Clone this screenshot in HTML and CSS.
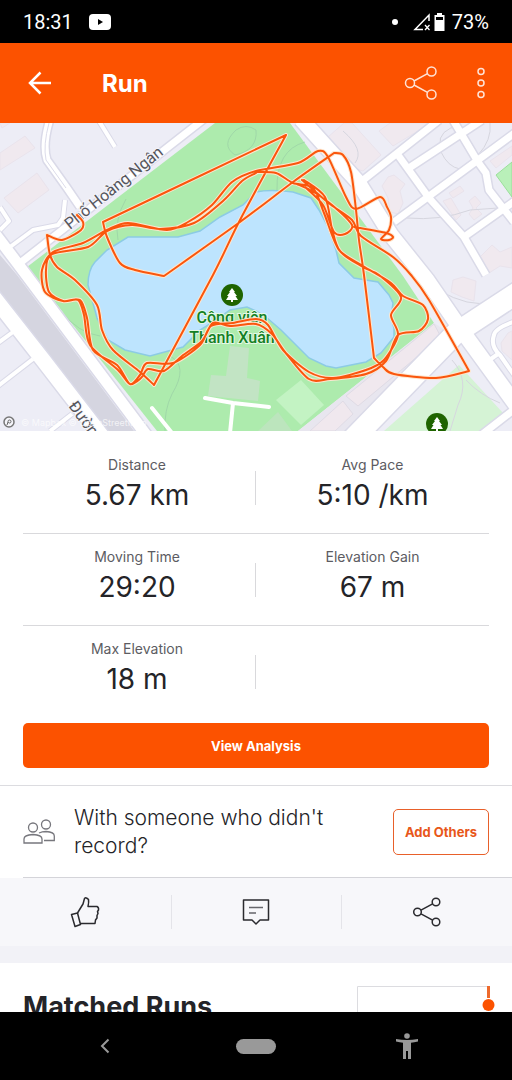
FILE: index.html
```
<!DOCTYPE html>
<html lang="en">
<head>
  <meta charset="UTF-8">
  <meta name="viewport" content="width=device-width, initial-scale=1">
  <title>Run</title>
  <link rel="stylesheet" href="styles.css">
</head>
<body>

  <div class="status-bar">
    <span>18:31</span>
    <svg class="video-icon" width="22" height="16" viewBox="0 0 22 16">
      <rect width="22" height="16" rx="4" fill="#fff"/>
      <path d="M9 5 L14 8 L9 11 Z" fill="#000"/>
    </svg>
    <div class="status-right">
      <span class="dot"></span>
      <svg width="34" height="20" viewBox="0 0 34 20">
        <path d="M17 9 V3 L3 17.500 H11" fill="none" stroke="#fff" stroke-width="1.500"/>
        <path d="M13 13 L17.500 18 M17.500 13 L13 18" stroke="#fff" stroke-width="1.300"/>
        <path d="M25 1 h5 v2 h2.500 v16 h-10 V3 H25 Z" fill="#fff"/>
        <rect x="24" y="5" width="7" height="3" fill="#000"/>
      </svg>
      <span>73%</span>
    </div>
  </div>

  <header class="app-bar">
    <button class="icon-button" aria-label="Back">
      <svg width="24" height="24" viewBox="0 0 24 24" fill="none" stroke="#fff" stroke-width="2.500">
        <path d="M23 12 H2 M12.500 1.500 L2 12 L12.500 22.500"/>
      </svg>
    </button>
    <h1>Run</h1>
    <button class="icon-button" aria-label="Share">
      <svg width="34" height="34" viewBox="0 0 34 34" fill="none" stroke="#ffe3d6" stroke-width="1.500">
        <circle cx="6" cy="17" r="4.500"/>
        <circle cx="27.500" cy="5.500" r="4.500"/>
        <circle cx="27.500" cy="28.500" r="4.500"/>
        <path d="M10 15 L23.500 7.700 M10 19 L23.500 26.300"/>
      </svg>
    </button>
    <button class="icon-button more" aria-label="More options">
      <svg width="10" height="32" viewBox="0 0 10 32" fill="none" stroke="#ffe3d6" stroke-width="1.500">
        <circle cx="5" cy="4.500" r="3"/>
        <circle cx="5" cy="16" r="3"/>
        <circle cx="5" cy="27.500" r="3"/>
      </svg>
    </button>
  </header>

  <main>
    <svg class="map" viewBox="0 123 512 308" preserveAspectRatio="xMidYMid slice">
      <rect x="0" y="123" width="512" height="308" fill="#ededf6"/>

      <!-- buildings -->
      <g fill="#f0e9ef" stroke="#e9e3ec" stroke-width="1">
        <path d="M0 153 L25 136 L35 148 L0 170 Z"/>
        <path d="M4 198 L37 173 L49 190 L18 213 Z"/>
        <path d="M0 123 H10 L2 128 Z"/>
        <path d="M328 137 L344 123 H352 L381 155 L363 171 L349 167 L335 150 Z"/>
        <path d="M379 131 L390 123 H431 L393 146 Z"/>
        <path d="M382 186 L388 177 L394 175 L400 180 L405 184 L400 191 L403 203 L398 214 L390 212 L388 198 Z"/>
        <path d="M449 193 L460 186 L464 191 L453 198 Z"/>
        <path d="M443 201 L451 198 L461 215 L456 220 Z"/>
        <path d="M469 201 L475 196 L481 203 L476 208 L482 214 L474 220 L469 214 L473 208 Z"/>
        <path d="M490 161 L512 146 V155 L496 168 Z"/>
        <path d="M480 257 L492 245 L500 252 L512 247 V268 L500 266 L489 273 Z"/>
        <path d="M453 280 L463 277 L476 281 L474 301 L462 297 L451 292 Z"/>
        <path d="M501 343 L508 333 L512 331 V360 L502 351 Z"/>
      </g>
      <path d="M496 175 L512 162 V197 Z" fill="#b9f0b9" stroke="#9adf9a"/>

      <!-- park and pond -->
      <path d="M215 123 H290 L403 276 L434 323 L298 431 H157 L27 267 Z" fill="#adebad"/>
      <path d="M434 323 L298 431 H345 L445 330 Z" fill="#e8e6ef"/>
      <path d="M434 324 L346 396 L358 406 L441 337 Z M343 401 L310 431 H335 L353 414 Z" fill="#f0e8ee" stroke="#dfdbe5" stroke-width="1"/>
      <path d="M276 400 L301 380 L324 405 L301 425 Z" fill="#c3f3c3"/>
      <path d="M384 431 L459 365 L503 413 L483 431 Z" fill="#d5f3d5"/>
      <path d="M230 346 L249 348 L247 378 L260 381 L258 401 L208 396 L211 375 L226 376 Z" fill="#c2e4c4"/>
      <path d="M258 431 L278 412 L292 431 Z" fill="#bce5bd"/>
      <path d="M88 285 Q88 270 95 262 L107 250 L128 237 H178 L200 231 L220 217 L243 205 L256 192 Q270 189 293 192 L311 198 L319 210 L328 227 L336 250 L339 263 L354 278 L378 282 L389 295 L393 303 L391 318 L394 328 V337 L381 353 L366 362 L336 368 L326 366 L309 358 L281 330 L266 317 L256 311 L247 307 L230 310 L213 322 L200 330 L183 347 L150 356 L125 350 L108 340 L97 318 Z" fill="#bde4fe" stroke="#8ccbe4" stroke-width="1.500"/>

      <!-- foot paths -->
      <g fill="none" stroke="#9acfa5" stroke-width="1" opacity=".7">
        <path d="M126 199 Q114 220 118 240 M236 130 Q220 145 235 155 Q258 150 256 130 Q246 123 236 130 M305 142 Q276 150 277 190 M61 311 Q78 333 100 336 M170 356 Q189 366 172 394 Q164 410 165 431"/>
      </g>
      <g fill="none" stroke="#d6d6df" stroke-width="1">
        <path d="M407 218 Q440 221 470 210 L512 207 M440 145 Q438 130 460 125 M441 152 Q448 167 460 169 M478 155 Q492 140 490 123 M438 290 Q470 308 490 302 M452 360 Q470 380 458 405 L450 431 M466 380 Q480 395 500 403 M343 131 Q365 150 355 163"/>
      </g>

      <!-- railway strip -->
      <path d="M0 255 L17 275 L134 431 H100 L15 312 L0 293 Z" fill="#d5d5e0"/>

      <!-- roads, casing first -->
      <g fill="none" stroke="#dadae8" stroke-linejoin="round">
        <path class="wide-casing" d="M350 442 L456 333 L520 291"/>
        <path class="main-casing" d="M301 119 L358 182 L391 235 L427 280 L460 328 L516 405"/>
        <path class="main-casing" d="M-8 295 L43 360 L104 439"/>
        <path class="side-casing" d="M-4 235 L15 260 L150 440"/>
        <path class="road-casing" d="M50 119 Q42 145 47 160 L67 188 L80 207 M204 119 L20 263 M439 120 L357 185 M516 132 L394 222 M398 155 L429 198 L464 237 L486 275 M453 120 L478 162 L486 173 L489 190 L514 222 M482 120 L409 168 M464 237 L516 200 M480 436 L516 408"/>
        <path class="lane-casing" d="M99 121 L115 147 M10 247 L33 230 L58 225 L63 218 L65 200 M0 207 L9 221 L0 230 M-2 343 L13 332 M-2 386 L33 359 M50 431 L72 414 M516 321 Q495 328 494 335 Q490 346 500 355 L516 378 M488 361 L498 354"/>
      </g>
      <g fill="none" stroke="#fff" stroke-linejoin="round">
        <path class="wide" d="M350 442 L456 333 L520 291"/>
        <path class="main" d="M301 119 L358 182 L391 235 L427 280 L460 328 L516 405"/>
        <path class="main" d="M-8 295 L43 360 L104 439"/>
        <path class="side" d="M-4 235 L15 260 L150 440"/>
        <path class="road" d="M50 119 Q42 145 47 160 L67 188 L80 207 M204 119 L20 263 M439 120 L357 185 M516 132 L394 222 M398 155 L429 198 L464 237 L486 275 M453 120 L478 162 L486 173 L489 190 L514 222 M482 120 L409 168 M464 237 L516 200 M480 436 L516 408"/>
        <path class="lane" d="M99 121 L115 147 M10 247 L33 230 L58 225 L63 218 L65 200 M0 207 L9 221 L0 230 M-2 343 L13 332 M-2 386 L33 359 M50 431 L72 414 M516 321 Q495 328 494 335 Q490 346 500 355 L516 378 M488 361 L498 354"/>
        <path class="lane" stroke-linecap="round" d="M205 398 L233 403 L269 407 M233 403 L230 433 M152 408 L172 433"/>
      </g>
      <path d="M49 123 Q43 145 46 160 L66 188" fill="none" stroke="#dcdcea"/>

      <!-- labels -->
      <g class="street">
        <text transform="translate(70 230) rotate(-39)">Phố Hoàng Ngân</text>
        <text transform="translate(68 406) rotate(54)">Đường</text>
      </g>
      <g class="park" text-anchor="middle">
        <text x="232" y="323">Công viên</text>
        <text x="232" y="343">Thanh Xuân</text>
      </g>
      <g id="tree">
        <circle cx="232" cy="295" r="11" fill="#1f6400"/>
        <path d="M232 288 L235 292 H234 L237 296 H235.500 L238 300 H233 V302 H231 V300 H226 L228.500 296 H227 L230 292 H229 Z" fill="#fff"/>
      </g>
      <use href="#tree" x="205" y="129"/>

      <g id="route"></g>

      <circle cx="9" cy="422" r="5" fill="#f5f5fa" stroke="#777" stroke-width="1.500"/>
      <circle cx="9.500" cy="421.500" r="1.500" fill="none" stroke="#666"/>
      <path d="M8 422 L7 425" stroke="#666"/>
      <text class="credit" x="21" y="426">© Mapbox © OpenStreetMap</text>
    </svg>

    <dl class="stats">
      <div class="stat">
        <dt>Distance</dt>
        <dd>5.67 km</dd>
      </div>
      <div class="stat">
        <dt>Avg Pace</dt>
        <dd>5:10 /km</dd>
      </div>
      <div class="stat">
        <dt>Moving Time</dt>
        <dd>29:20</dd>
      </div>
      <div class="stat">
        <dt>Elevation Gain</dt>
        <dd>67 m</dd>
      </div>
      <div class="stat">
        <dt>Max Elevation</dt>
        <dd>18 m</dd>
      </div>
    </dl>

    <div class="analysis">
      <button class="primary-button">View Analysis</button>
    </div>

    <section class="others">
      <svg width="32" height="26" viewBox="0 0 32 26" fill="none" stroke="#77777d" stroke-width="1.300">
        <circle cx="10" cy="8.500" r="4.500"/>
        <circle cx="23" cy="5.500" r="4.500"/>
        <path d="M1 24 V20 Q1 16 10 15.500 Q19 16 19 20 V24 Z"/>
        <path d="M16 14 Q19 12.500 23 12.500 Q31.300 13 31.300 17 V21.500 H21"/>
      </svg>
      <p>With someone who didn't record?</p>
      <button class="outline-button">Add Others</button>
    </section>

    <div class="actions">
      <button aria-label="Give kudos">
        <svg width="30" height="32" viewBox="0 0 30 32" fill="none" stroke="#2a2a2e" stroke-width="1.500" stroke-linejoin="round">
          <path d="M1.500 18.500 L7.500 17 L10.500 28.500 L5 30.500 Z"/>
          <path d="M7.500 17 L13 8 L14.500 2.500 Q16 .8 18.500 3.500 Q19 6 18 10.500 H27 Q29 11.500 28.500 14 L27.500 15.500 L28 17.500 L27 19.500 L27 22 L25.500 24 L25 27.500 H10.500"/>
        </svg>
      </button>
      <button aria-label="Comment">
        <svg width="28" height="28" viewBox="0 0 28 28" fill="none" stroke="#2a2a2e" stroke-width="1.500" stroke-linejoin="round">
          <path d="M1.500 2 H26.500 V22 H18 L14 26 L10 22 H1.500 Z"/>
          <path d="M7 9.500 H21 M7 15 H14" stroke="#66666b" stroke-width="1.300"/>
        </svg>
      </button>
      <button aria-label="Share activity">
        <svg width="30" height="30" viewBox="0 0 30 30" fill="none" stroke="#2a2a2e" stroke-width="1.500">
          <circle cx="5.500" cy="15" r="3.800"/>
          <circle cx="24" cy="5" r="3.800"/>
          <circle cx="24" cy="25" r="3.800"/>
          <path d="M9 13.200 L20.600 6.900 M9 16.800 L20.600 23.100"/>
        </svg>
      </button>
    </div>

    <section class="matched">
      <h2>Matched Runs</h2>
      <svg width="139" height="60" viewBox="0 0 139 60">
        <path d="M.5 60 V.5 H132" fill="none" stroke="#dcdce0"/>
        <path d="M131.500 0 V12" stroke="#ee6a2c" stroke-width="3"/>
        <circle cx="131.500" cy="19" r="6" fill="#fc5200"/>
      </svg>
    </section>
  </main>

  <nav class="system-nav">
    <button aria-label="System back">
      <svg width="10" height="16" viewBox="0 0 10 16" fill="none" stroke="#999" stroke-width="2">
        <path d="M8.500 1.500 L2 8 L8.500 14.500"/>
      </svg>
    </button>
    <button aria-label="Home"><span class="pill"></span></button>
    <button aria-label="Accessibility">
      <svg width="24" height="26" viewBox="0 0 24 26" fill="#999">
        <circle cx="12" cy="3" r="2.800"/>
        <path d="M1 6 Q12 8 23 6 V8.500 Q19 9.500 16 9.700 V26 H13 V18 H11 V26 H8 V9.700 Q5 9.500 1 8.500 Z"/>
      </svg>
    </button>
  </nav>

  <script>
    // each list is one smooth stretch of the track, sharp turns start a new list
    const stretches = [
      [[77,215],[83,222],[81,230],[62,240],[47,235]],
      [[47,235],[50,255],[57,267],[75,280],[97,305],[102,330],[113,350],[140,372],[154,385]],
      [[154,385],[213,275],[240,220],[286,135]],
      [[286,135],[103,222]],
      [[103,222],[107,237],[120,263],[135,270],[164,276]],
      [[164,276],[240,222],[293,182],[334,153]],
      [[334,153],[343,155],[351,172],[356,210],[359,240],[364,275],[374,358]],
      [[374,358],[383,367],[394,374],[436,378],[469,371]],
      [[469,371],[429,300],[411,275],[393,257],[361,236],[352,220],[330,204],[302,180]],
      [[354,227],[386,233],[393,237],[389,240],[381,239],[389,230],[391,217],[387,207],[380,197],[356,209],[346,197],[328,157],[318,151],[298,163],[256,171],[232,182],[212,205],[188,222],[167,230],[128,223],[107,230],[83,243],[53,252],[42,270],[45,292],[63,301],[80,300],[87,318],[93,350],[117,365],[130,384],[140,375],[147,363],[173,363],[200,345],[211,326],[233,323],[256,319],[268,325],[283,350],[309,372],[333,378],[366,370],[384,360],[398,335],[391,315],[401,297],[379,275],[363,267],[339,250],[324,213],[313,188],[293,183],[276,173],[256,172]],
      [[256,173],[242,181],[224,200],[194,223],[160,229],[132,225],[107,231],[88,247],[52,254],[46,270],[49,292],[63,301],[78,300],[84,315],[90,345],[118,370],[130,384],[141,378],[148,369],[164,371],[182,356],[202,341],[213,323],[230,326],[256,324],[272,334],[285,352],[309,379],[330,379],[366,374],[386,361],[398,335],[419,331],[428,319],[423,305],[403,296],[391,283],[363,266],[340,251],[332,229],[325,197],[304,180]],
      [[297,184],[312,191],[332,205],[352,225],[345,234],[334,232],[323,205],[305,187]]
    ];

    function smooth(pts) {
      let d = "M" + pts[0];
      for (let i = 0; i < pts.length - 1; i++) {
        const a = pts[i - 1] || pts[i];
        const b = pts[i];
        const c = pts[i + 1];
        const e = pts[i + 2] || c;
        const c1 = [b[0] + (c[0] - a[0]) / 7, b[1] + (c[1] - a[1]) / 7];
        const c2 = [c[0] - (e[0] - b[0]) / 7, c[1] - (e[1] - b[1]) / 7];
        d += " C" + c1 + " " + c2 + " " + c;
      }
      return d;
    }

    const route = document.getElementById("route");
    ["route-halo", "route-line"].forEach((name) => {
      const path = document.createElementNS("http://www.w3.org/2000/svg", "path");
      path.setAttribute("class", name);
      path.setAttribute("d", stretches.map(smooth).join(" "));
      route.appendChild(path);
    });
  </script>
</body>
</html>
```
FILE: styles.css
```
* {
  box-sizing: border-box;
}

body {
  margin: 0;
  height: 100vh;
  display: flex;
  flex-direction: column;
  overflow: hidden;
  background-color: #fff;
  color: #242428;
  font-family: Inter, "Liberation Sans", sans-serif;
}

button {
  border: none;
  background: none;
  padding: 0;
  font-family: inherit;
  cursor: pointer;
}

svg {
  display: block;
  flex-shrink: 0;
}

.status-bar {
  flex-shrink: 0;
  display: flex;
  align-items: center;
  height: 43px;
  padding: 0 23px;
  background-color: #000;
  color: #fff;
  font-family: Roboto, sans-serif;
  font-size: 20px;
}

.video-icon {
  margin-left: 16px;
}

.status-right {
  display: flex;
  align-items: center;
  gap: 6px;
  margin-left: auto;
}

.dot {
  width: 6px;
  height: 6px;
  margin-right: 8px;
  border-radius: 50%;
  background-color: #fff;
}

.app-bar {
  flex-shrink: 0;
  display: flex;
  align-items: center;
  height: 80px;
  padding: 0 26px 0 28px;
  background-color: #fc5200;
  color: #fff;
}

.app-bar h1 {
  flex: 1;
  margin: 0 0 0 50px;
  font-size: 24px;
  font-weight: 700;
}

.more {
  margin-left: 38px;
}

main {
  flex: 1;
  min-height: 0;
  overflow: hidden;
}

/* map */

.map {
  width: 100%;
  height: 308px;
}

.wide-casing { stroke-width: 24; }
.wide { stroke-width: 21; }
.main-casing { stroke-width: 18; }
.main { stroke-width: 15; }
.side-casing { stroke-width: 14; }
.side { stroke-width: 11; }
.road-casing { stroke-width: 10; }
.road { stroke-width: 7; }
.lane-casing { stroke-width: 6; }
.lane { stroke-width: 4; }

.street {
  fill: #55555c;
  stroke: #f6f6fb;
  stroke-width: 2;
  paint-order: stroke;
  font-family: Roboto, sans-serif;
  font-size: 16px;
}

.park {
  fill: #148024;
  stroke: #e5f8e5;
  stroke-width: 2;
  paint-order: stroke;
  font-family: Roboto, sans-serif;
  font-size: 16px;
  font-weight: 500;
}

.credit {
  fill: #fff;
  opacity: 0.7;
  font-size: 9px;
}

.route-halo,
.route-line {
  fill: none;
  stroke-linejoin: round;
  stroke-linecap: round;
}

.route-halo {
  stroke: #fde6cf;
  stroke-width: 4;
}

.route-line {
  stroke: #fa560d;
  stroke-width: 2;
}

/* stats */

.stats {
  display: grid;
  grid-template-columns: 1fr 1fr;
  margin: 0 23px;
  padding-top: 11px;
}

.stat {
  position: relative;
  height: 92px;
  padding-top: 13px;
  border-bottom: 1px solid #d9d9dc;
  text-align: center;
}

.stat:nth-child(odd) {
  padding-right: 5px;
}

.stat:nth-child(5) {
  border-bottom: none;
}

.stat:nth-child(odd)::after {
  content: "";
  position: absolute;
  right: 0;
  top: 29px;
  width: 1px;
  height: 34px;
  background-color: #d9d9dc;
}

.stat dt {
  color: #5c5c62;
  font-size: 14px;
  line-height: 20px;
}

.stat dd {
  margin: 2px 0 0;
  font-size: 28px;
  line-height: 36px;
}

.analysis {
  padding: 5px 23px 17px;
  border-bottom: 1px solid #dcdce0;
}

.primary-button {
  width: 100%;
  height: 45px;
  border-radius: 5px;
  background-color: #fc5200;
  color: #fff;
  font-size: 13px;
  font-weight: 700;
}

.others {
  display: flex;
  align-items: center;
  height: 92px;
  margin-left: 23px;
  padding-right: 23px;
  border-bottom: 1px solid #d4d4d9;
}

.others p {
  flex: 1;
  margin: 0 48px 0 19px;
  font-size: 21px;
  font-weight: 300;
  line-height: 28px;
}

.outline-button {
  width: 96px;
  height: 46px;
  border: 1px solid #e8602a;
  border-radius: 5px;
  color: #e8571a;
  font-size: 13px;
  font-weight: 700;
}

.actions {
  display: grid;
  grid-template-columns: 1fr 1fr 1fr;
  align-items: center;
  height: 68px;
  background-color: #f7f7fa;
}

.actions button {
  display: flex;
  align-items: center;
  justify-content: center;
  height: 34px;
}

.actions button + button {
  border-left: 1px solid #e4e4e9;
}

.matched {
  display: flex;
  justify-content: space-between;
  border-top: 17px solid #f2f2f7;
  padding: 23px 16px 0 23px;
}

.matched h2 {
  margin: 4px 0 0;
  font-size: 27px;
  font-weight: 700;
  line-height: 34px;
}

.system-nav {
  flex-shrink: 0;
  display: grid;
  grid-template-columns: 1fr 1fr 1fr;
  height: 68px;
  padding: 0 30px;
  background-color: #000;
}

.system-nav button {
  display: flex;
  align-items: center;
  justify-content: center;
}

.pill {
  width: 40px;
  height: 15px;
  border-radius: 8px;
  background-color: #999;
}
```
